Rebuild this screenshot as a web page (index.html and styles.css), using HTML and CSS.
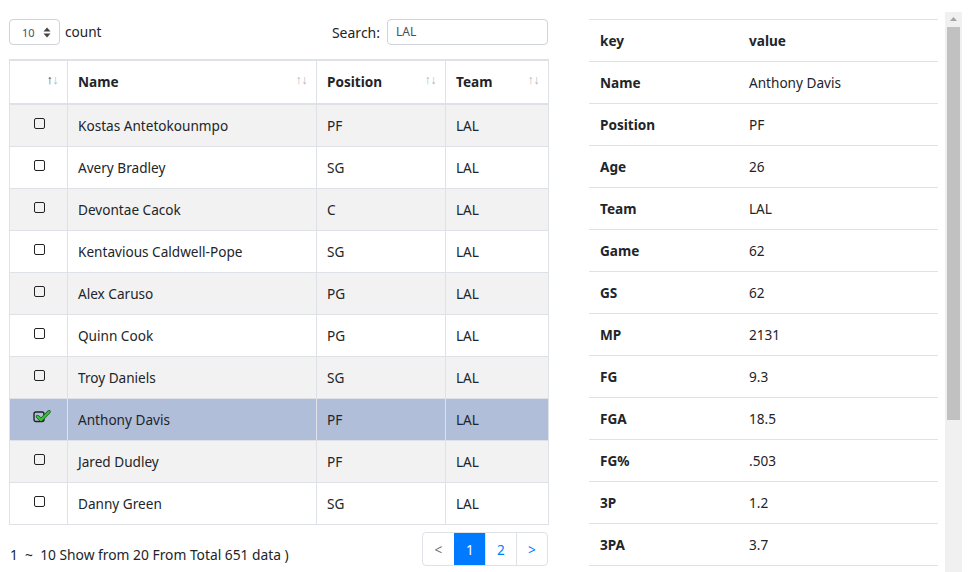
FILE: index.html
```html
<!DOCTYPE html>
<html>
<head>
<meta charset="utf-8">
<link rel="stylesheet" href="styles.css">
</head>
<body>
<div class="page">
  <div class="left">
    <div class="controls">
      <div class="length">
        <div class="select"><span class="sel-val">10</span><svg class="sel-arrows" width="8" height="11" viewBox="0 0 8 11"><path d="M4 0.5 L7.5 4.5 H0.5 Z M4 10.5 L7.5 6.5 H0.5 Z" fill="#444"/></svg></div>
        <span class="count">count</span>
      </div>
      <div class="search">
        <span class="search-label">Search:</span>
        <div class="search-input">LAL</div>
      </div>
    </div>
    <table class="grid">
      <colgroup><col class="c1"><col class="c2"><col class="c3"><col class="c4"></colgroup>
      <thead>
        <tr>
          <th class="chk-h"><span class="sort"><span class="up on">↑</span><span class="dn">↓</span></span></th>
          <th>Name<span class="sort"><span class="up">↑</span><span class="dn">↓</span></span></th>
          <th>Position<span class="sort"><span class="up">↑</span><span class="dn">↓</span></span></th>
          <th>Team<span class="sort"><span class="up">↑</span><span class="dn">↓</span></span></th>
        </tr>
      </thead>
      <tbody>
        <tr class="odd"><td class="chk"><span class="box"></span></td><td>Kostas Antetokounmpo</td><td>PF</td><td>LAL</td></tr>
        <tr><td class="chk"><span class="box"></span></td><td>Avery Bradley</td><td>SG</td><td>LAL</td></tr>
        <tr class="odd"><td class="chk"><span class="box"></span></td><td>Devontae Cacok</td><td>C</td><td>LAL</td></tr>
        <tr><td class="chk"><span class="box"></span></td><td>Kentavious Caldwell-Pope</td><td>SG</td><td>LAL</td></tr>
        <tr class="odd"><td class="chk"><span class="box"></span></td><td>Alex Caruso</td><td>PG</td><td>LAL</td></tr>
        <tr><td class="chk"><span class="box"></span></td><td>Quinn Cook</td><td>PG</td><td>LAL</td></tr>
        <tr class="odd"><td class="chk"><span class="box"></span></td><td>Troy Daniels</td><td>SG</td><td>LAL</td></tr>
        <tr class="selected"><td class="chk"><svg class="checked" width="20" height="14" viewBox="0 0 20 14"><rect x="1" y="2" width="10" height="9.5" rx="2" fill="none" stroke="#222" stroke-width="1.4"/><path d="M4.5 6.5 L8 10 L16 1.8" fill="none" stroke="#1d5f1d" stroke-width="3.4" stroke-linecap="round" stroke-linejoin="round"/><path d="M4.5 6.5 L8 10 L16 1.8" fill="none" stroke="#3ec83e" stroke-width="1.8" stroke-linecap="round" stroke-linejoin="round"/></svg></td><td>Anthony Davis</td><td>PF</td><td>LAL</td></tr>
        <tr class="odd"><td class="chk"><span class="box"></span></td><td>Jared Dudley</td><td>PF</td><td>LAL</td></tr>
        <tr><td class="chk"><span class="box"></span></td><td>Danny Green</td><td>SG</td><td>LAL</td></tr>
      </tbody>
    </table>
    <div class="footer">
      <div class="info">1&nbsp; ~ &nbsp;10 Show from 20 From Total 651 data )</div>
      <div class="pager">
        <span class="pg prev">&lt;</span>
        <span class="pg active">1</span>
        <span class="pg">2</span>
        <span class="pg">&gt;</span>
      </div>
    </div>
  </div>
  <div class="right">
    <div class="kv-view">
      <table class="kv">
        <thead><tr><th class="k">key</th><th>value</th></tr></thead>
        <tbody>
          <tr><th class="k">Name</th><td>Anthony Davis</td></tr>
          <tr><th class="k">Position</th><td>PF</td></tr>
          <tr><th class="k">Age</th><td>26</td></tr>
          <tr><th class="k">Team</th><td>LAL</td></tr>
          <tr><th class="k">Game</th><td>62</td></tr>
          <tr><th class="k">GS</th><td>62</td></tr>
          <tr><th class="k">MP</th><td>2131</td></tr>
          <tr><th class="k">FG</th><td>9.3</td></tr>
          <tr><th class="k">FGA</th><td>18.5</td></tr>
          <tr><th class="k">FG%</th><td>.503</td></tr>
          <tr><th class="k">3P</th><td>1.2</td></tr>
          <tr><th class="k">3PA</th><td>3.7</td></tr>
        </tbody>
      </table>
    </div>
    <div class="scrollbar">
      <div class="sb-btn"><svg width="17" height="15" viewBox="0 0 17 15"><path d="M8.5 5 L12 9 H5 Z" fill="#a3a3a3"/></svg></div>
      <div class="sb-track"><div class="sb-thumb"></div></div>
    </div>
  </div>
</div>
</body>
</html>
```

FILE: styles.css
```css
html, body {
  margin: 0;
  padding: 0;
  overflow: hidden;
  background: #fff;
}
body {
  font-family: "Noto Sans", "Open Sans", sans-serif;
  font-size: 13.6px;
  color: #212529;
}
.page {
  display: flex;
  align-items: flex-start;
  padding-left: 9px;
  padding-top: 12px;
  gap: 41px;
}
.left {
  width: 539px;
  margin-top: 7px;
}
.controls {
  display: flex;
  justify-content: space-between;
  align-items: center;
  height: 26px;
  margin-bottom: 14px;
}
.length {
  display: flex;
  align-items: center;
  gap: 5px;
}
.select {
  width: 51px;
  height: 26px;
  box-sizing: border-box;
  border: 1px solid #ced4da;
  border-radius: 4px;
  display: flex;
  align-items: center;
  padding-left: 12px;
  gap: 8px;
  font-size: 11px;
  color: #495057;
}
.count {
  position: relative;
  top: -1px;
}
.search {
  display: flex;
  align-items: center;
  gap: 7px;
}
.search-label {
  font-size: 14px;
}
.search-input {
  width: 161px;
  height: 26px;
  box-sizing: border-box;
  border: 1px solid #ced4da;
  border-radius: 4px;
  font-size: 12px;
  color: #495057;
  padding-left: 8px;
  line-height: 24px;
}
.grid {
  width: 539px;
  table-layout: fixed;
  border-collapse: collapse;
  border: 1px solid #dee2e6;
}
.c1 { width: 58px; }
.c2 { width: 249px; }
.c3 { width: 129px; }
.c4 { width: 103px; }
.grid th, .grid td {
  border: 1px solid #dee2e6;
  text-align: left;
  padding: 10px 10px 10px 10px;
  line-height: 21px;
  height: 21px;
  white-space: nowrap;
}
.grid th {
  position: relative;
  border-top: 2px solid #dee2e6;
  border-bottom: 2px solid #dee2e6;
  font-weight: bold;
  padding-top: 10px;
  padding-bottom: 11px;
}
.sort {
  position: absolute;
  right: 9px;
  top: 11px;
  font-size: 12.5px;
  line-height: 16px;
  font-weight: normal;
  color: #b8b8b8;
  letter-spacing: -0.5px;
}
.sort .on { color: #44446a; }
.grid tbody tr.odd td { background: #f2f2f2; }
.grid tbody tr.selected td { background: #b0bed9; }
.grid td.chk {
  vertical-align: top;
  padding: 13px 0 0 0;
}
.box {
  display: block;
  width: 9px;
  height: 9px;
  border: 1.4px solid #222;
  border-radius: 2px;
  margin-left: 24px;
}
.checked {
  display: block;
  margin-left: 23px;
  margin-top: -2px;
}
.footer {
  display: flex;
  justify-content: space-between;
  align-items: flex-start;
  margin-top: 7px;
}
.info {
  padding-top: 13px;
  padding-left: 1px;
  font-size: 13.8px;
}
.pager {
  display: flex;
  border: 1px solid #dee2e6;
  border-radius: 4px;
  overflow: hidden;
  height: 34px;
  box-sizing: border-box;
}
.pg {
  width: 30px;
  display: flex;
  align-items: center;
  justify-content: center;
  color: #007bff;
  border-left: 1px solid #dee2e6;
}
.pg.prev {
  width: 31px;
  border-left: none;
  color: #6c757d;
}
.pg.active {
  background: #007bff;
  color: #fff;
  border-left-color: #007bff;
}
.right {
  display: flex;
  height: 560px;
}
.kv-view {
  width: 356px;
  padding-top: 7px;
  overflow: hidden;
  box-sizing: border-box;
}
.scrollbar {
  width: 17px;
  background: #f0f0f0;
  display: flex;
  flex-direction: column;
}
.sb-btn {
  height: 15px;
  line-height: 0;
}
.sb-track {
  flex: 1;
  padding: 0 2px;
}
.sb-thumb {
  height: 393px;
  background: #c1c1c1;
}
.kv {
  width: 349px;
  border-collapse: collapse;
  table-layout: fixed;
}
.kv th, .kv td {
  text-align: left;
  border-top: 1px solid #dee2e6;
  border-bottom: 1px solid #dee2e6;
  padding: 10px 11px;
  line-height: 21px;
  font-weight: normal;
}
.kv th.k { width: 127px; font-weight: bold; }
.kv thead th { font-weight: bold; }
```
